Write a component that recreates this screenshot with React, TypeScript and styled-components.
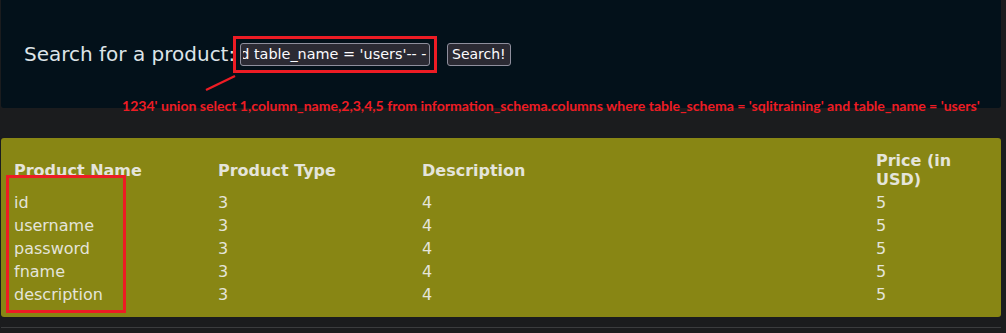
import React, { useEffect, useRef } from 'react';
import styled, { createGlobalStyle } from 'styled-components';

const QUERY =
  "1234' union select 1,column_name,2,3,4,5 from information_schema.columns where table_schema = 'sqlitraining' and table_name = 'users'";

const rows = [
  { name: 'id', type: '3', description: '4', price: '5' },
  { name: 'username', type: '3', description: '4', price: '5' },
  { name: 'password', type: '3', description: '4', price: '5' },
  { name: 'fname', type: '3', description: '4', price: '5' },
  { name: 'description', type: '3', description: '4', price: '5' },
];

const GlobalStyle = createGlobalStyle`
  body {
    margin: 0;
    background: #1b1c1e;
    font-family: "DejaVu Sans", sans-serif;
  }
`;

const App: React.FC = () => {
  const inputRef = useRef<HTMLInputElement>(null);

  useEffect(() => {
    if (inputRef.current) {
      inputRef.current.scrollLeft = inputRef.current.scrollWidth;
    }
  }, []);

  return (
    <>
      <GlobalStyle />
      <Page>
        <SearchPanel>
          <SearchLabel>Search for a product:</SearchLabel>
          <Highlight>
            <SearchInput ref={inputRef} readOnly value={`${QUERY}-- -`} />
          </Highlight>
          <SearchButton>Search!</SearchButton>
        </SearchPanel>

        <Pointer width="32" height="18" viewBox="0 0 32 18">
          <line x1="1" y1="16" x2="30" y2="2" stroke="#ed1c24" strokeWidth="2.4" />
        </Pointer>
        <Annotation>{QUERY}</Annotation>

        <ResultsPanel>
          <ColumnMark />
          <Table>
            <colgroup>
              <col style={{ width: 204 }} />
              <col style={{ width: 204 }} />
              <col style={{ width: 454 }} />
              <col />
            </colgroup>
            <thead>
              <tr>
                <Th>Product Name</Th>
                <Th>Product Type</Th>
                <Th>Description</Th>
                <Th>Price (in USD)</Th>
              </tr>
            </thead>
            <tbody>
              {rows.map((row) => (
                <tr key={row.name}>
                  <Td>{row.name}</Td>
                  <Td>{row.type}</Td>
                  <Td>{row.description}</Td>
                  <Td>{row.price}</Td>
                </tr>
              ))}
            </tbody>
          </Table>
        </ResultsPanel>

        <Divider />
      </Page>
    </>
  );
};

const Page = styled.div`
  position: relative;
  width: 1000px;
  margin-left: 1px;
`;

const SearchPanel = styled.div`
  display: flex;
  align-items: center;
  height: 108px;
  padding-left: 23px;
  background: #03111a;
  border-radius: 0 0 3px 3px;
`;

const SearchLabel = styled.span`
  width: 216px;
  font-size: 20px;
  color: #dde4e8;
  white-space: nowrap;
`;

const Highlight = styled.div`
  display: flex;
  outline: 3px solid #ed1c24;
  outline-offset: 4px;
  margin-right: 17px;
  position: relative;
`;

const SearchInput = styled.input`
  box-sizing: border-box;
  width: 190px;
  height: 23px;
  padding: 0 2px;
  background: #2b2a33;
  color: #fbfbfe;
  border: 1px solid #8f8f9d;
  border-radius: 3px;
  font-family: "DejaVu Sans", sans-serif;
  font-size: 14.4px;
  outline: none;
`;

const SearchButton = styled.button`
  box-sizing: border-box;
  height: 23px;
  padding: 0 4px;
  background: #2b2a33;
  color: #fbfbfe;
  border: 1px solid #8f8f9d;
  border-radius: 3px;
  font-family: "DejaVu Sans", sans-serif;
  font-size: 14px;
`;

const Pointer = styled.svg`
  position: absolute;
  left: 204px;
  top: 74px;
`;

const Annotation = styled.div`
  position: absolute;
  left: 121px;
  top: 97px;
  font-family: Lato, sans-serif;
  font-weight: 700;
  font-size: 14.05px;
  color: #ed1c24;
  white-space: nowrap;
`;

const ResultsPanel = styled.div`
  position: relative;
  margin-top: 30px;
  padding: 11px 13px 11px;
  background: #888614;
  border-radius: 3px;
`;

const ColumnMark = styled.div`
  position: absolute;
  left: 5px;
  top: 37px;
  width: 114px;
  height: 132px;
  border: 3px solid #ed1c24;
`;

const Table = styled.table`
  width: 100%;
  border-collapse: collapse;
  table-layout: fixed;
  color: #e4e4da;
  font-size: 16px;
  line-height: 19px;
`;

const Th = styled.th`
  padding: 2px 0;
  text-align: left;
  vertical-align: middle;
  font-weight: 700;
`;

const Td = styled.td`
  padding: 2px 0;
  height: 19px;
`;

const Divider = styled.div`
  height: 1px;
  margin-top: 10px;
  background: #3b3c3e;
`;

export default App;
